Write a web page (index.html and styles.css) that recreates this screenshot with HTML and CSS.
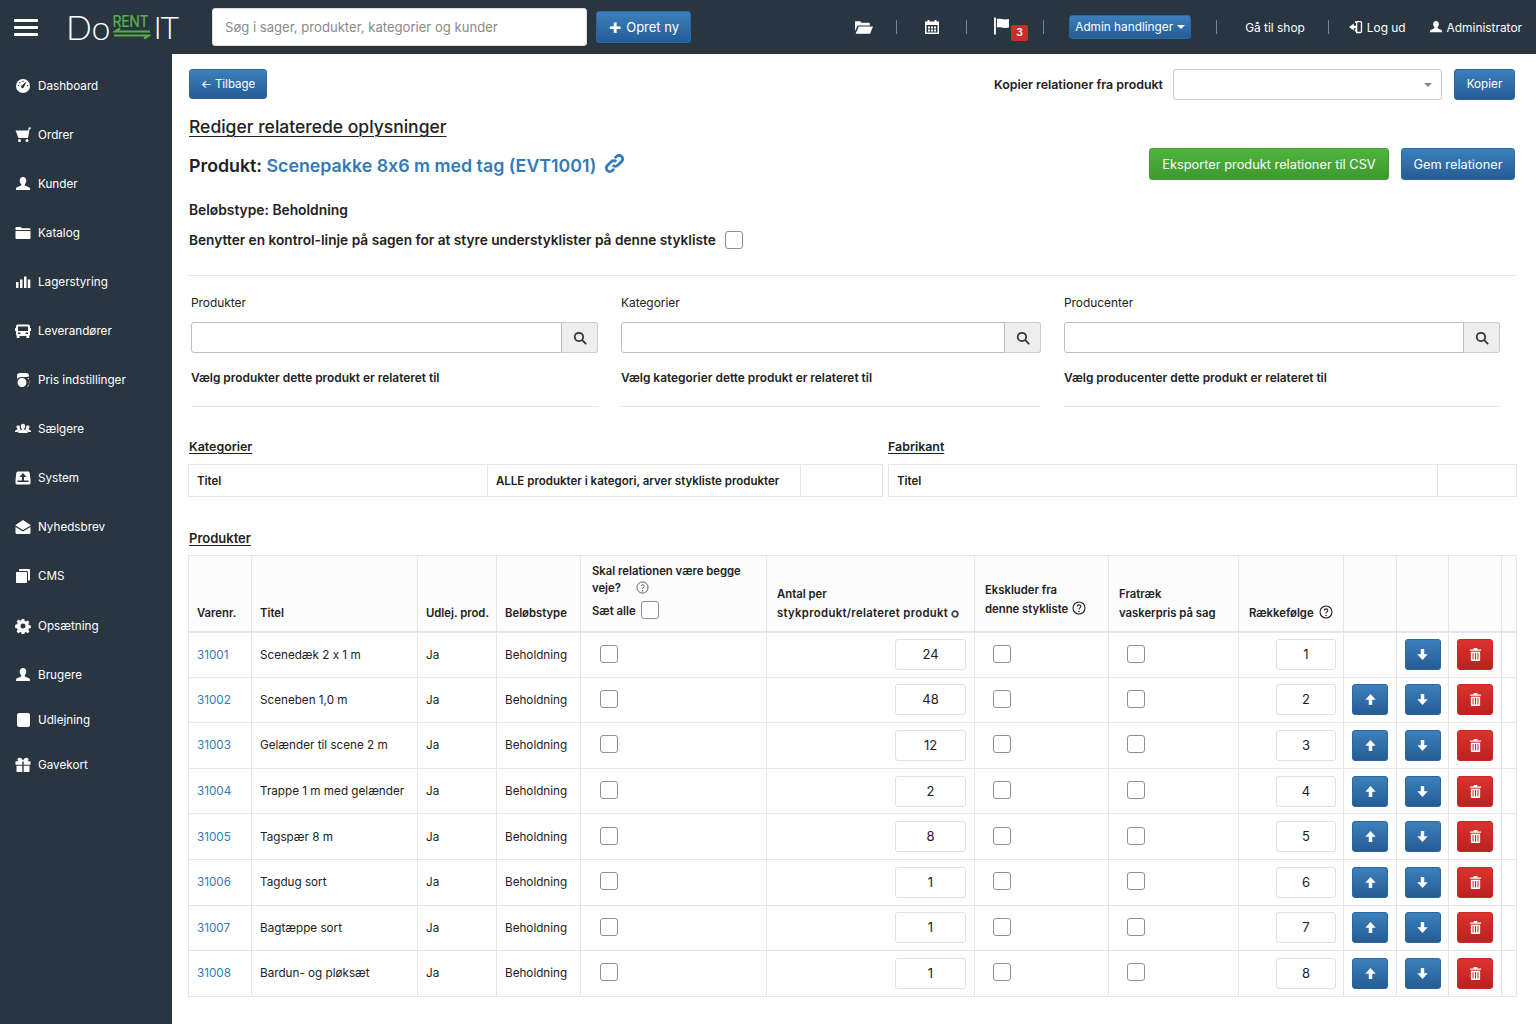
FILE: index.html
```html
<!DOCTYPE html>
<html lang="da">
  <head>
    <meta charset="UTF-8" />
    <title>DoRentIT</title>
    <link rel="stylesheet" href="styles.css">
  </head>
  <body>
    <svg class="icon-defs" width="0" height="0">
      <symbol id="i-user" viewBox="0 0 16 16"><path d="M8 1c2 0 3.300 1.500 3.300 3.600 0 1.500-.6 2.900-1.500 3.600v1.300l4.200 1.800c.8.400 1 1 1 2.700H1c0-1.700.2-2.300 1-2.700l4.200-1.800V8.200C5.300 7.500 4.700 6.100 4.700 4.600 4.700 2.500 6 1 8 1z"/></symbol>
      <symbol id="i-dash" viewBox="0 0 16 16"><path fill-rule="evenodd" d="M8 1a7 7 0 1 1 0 14A7 7 0 0 1 8 1zm3.600 2.600L7 7.200a1.500 1.500 0 1 0 2 1.800zM4 7H2.800v1.300H4zm.8-3.200-.9.900.9.900.9-.9zM8.600 2.800H7.400V4h1.200zM13.200 7H12v1.300h1.200z"/></symbol>
      <symbol id="i-cart" viewBox="0 0 16 16"><path d="M16 .5v1.300h-1.300L13 11H3.500L.5 3.500h12.600l.5-3zM4.500 12a1.500 1.500 0 1 1 0 3 1.500 1.500 0 0 1 0-3zm7.500 0a1.500 1.500 0 1 1 0 3 1.500 1.500 0 0 1 0-3z"/></symbol>
      <symbol id="i-folder" viewBox="0 0 16 16"><path d="M1.500 2h4.200l1 1.300h7.800c.5 0 1 .4 1 1V5H.5V3c0-.6.4-1 1-1zM.5 6h15v7c0 .6-.4 1-1 1h-13c-.6 0-1-.4-1-1z"/></symbol>
      <symbol id="i-bars" viewBox="0 0 16 16"><path d="M1 8h2.500v6H1zm4-2.500h2.500V14H5zm4-3h2.500V14H9zm3.800 3h2.500V14h-2.500z"/></symbol>
      <symbol id="i-truck" viewBox="0 0 16 16"><path fill-rule="evenodd" d="M3 1.500h10c1.200 0 2 .8 2 2V5h1v3h-1v3.500c0 .6-.3 1-.8 1.200V15h-2.700v-2h-7v2H1.800v-2.300c-.5-.2-.8-.6-.8-1.200V8H0V5h1V3.500c0-1.200.8-2 2-2zm0 2V8h10V3.500zM3 9.500V11h2.500V9.500zm7.500 0V11H13V9.500z"/></symbol>
      <symbol id="i-price" viewBox="0 0 16 16"><path d="M5 1h6c1.800 0 3 1 3 2.300 0 .7-.3 1.200-.8 1.700H6.500C4 5 2.500 6 2 7.500V3.500C2 2 3.200 1 5 1zM7 6a4.500 4.500 0 1 1 0 9 4.500 4.500 0 0 1 0-9zm5.500 0H14v7c0 1-.8 1.700-2 1.800a5.500 5.500 0 0 0 .5-8.800z"/></symbol>
      <symbol id="i-users" viewBox="0 0 18 16"><path d="M9 2c1.500 0 2.500 1.200 2.500 2.800 0 1.200-.5 2.300-1.200 2.800v1.200l3.200 1.500c.6.300.8.800.8 2.200H3.700c0-1.400.2-1.900.8-2.200l3.200-1.500V7.600C7 7.100 6.500 6 6.500 4.800 6.500 3.200 7.500 2 9 2zM3.500 4c1 0 1.700.5 2 1.400-.2 1.200.1 2.300.9 3v.8l-2.500 1.200c-.6.300-1 .6-1.200 1.100H0c0-1.300.2-1.700.7-2l1.900-.9V7.500C2 7 1.600 6.100 1.600 5.400 1.600 4.600 2.400 4 3.500 4zm11 0c1.100 0 1.900.6 1.900 1.400 0 .7-.4 1.600-1 2.100v1.100l1.900.9c.5.300.7.700.7 2h-2.700c-.2-.5-.6-.8-1.200-1.100l-2.500-1.200v-.8c.8-.7 1.100-1.800.9-3 .3-.9 1-1.400 2-1.400z"/></symbol>
      <symbol id="i-system" viewBox="0 0 16 16"><path fill-rule="evenodd" d="M3 1.500h10c1 0 1.500.6 1.700 1.500L15.500 10v3c0 .9-.6 1.500-1.500 1.500H2c-.9 0-1.500-.6-1.500-1.500v-3L1.300 3C1.500 2.100 2 1.500 3 1.500zM8 3 4.500 7H7v3.500H2.500V12h11v-1.500H9V7h2.500z"/></symbol>
      <symbol id="i-mail" viewBox="0 0 16 16"><path d="M8 1 15.500 6v.5L8 11 .5 6.500V6zM.5 8 8 12.500 15.500 8v5.500c0 .8-.6 1.500-1.500 1.500H2C1.100 15 .5 14.300.5 13.500z"/></symbol>
      <symbol id="i-copy" viewBox="0 0 16 16"><path d="M5 1h9c.6 0 1 .4 1 1v9.500c0 .6-.4 1-1 1h-1V4.500c0-.8-.6-1.500-1.500-1.500H4V2c0-.6.4-1 1-1zM2 4h9c.6 0 1 .4 1 1v9c0 .6-.4 1-1 1H2c-.6 0-1-.4-1-1V5c0-.6.4-1 1-1z"/></symbol>
      <symbol id="i-gear" viewBox="0 0 16 16"><path fill-rule="evenodd" d="M6.700 1h2.600l.4 2 1.200.5 1.700-1.100 1.800 1.800-1.100 1.700.5 1.200 2 .4v2.600l-2 .4-.5 1.200 1.100 1.700-1.800 1.800-1.700-1.100-1.200.5-.4 2H6.700l-.4-2-1.200-.5-1.700 1.100-1.800-1.800 1.100-1.700-.5-1.200-2-.4V6.700l2-.4.5-1.200-1.100-1.700 1.800-1.800 1.700 1.100 1.200-.5zM8 5.500a2.500 2.500 0 1 0 0 5 2.500 2.500 0 0 0 0-5z"/></symbol>
      <symbol id="i-book" viewBox="0 0 16 16"><path d="M4.500 1H13c1.200 0 2 .8 2 2v10c0 1.200-.8 2-2 2H4.500C2.800 15 2 14 2 12.500v-9C2 2 2.800 1 4.500 1z"/></symbol>
      <symbol id="i-gift" viewBox="0 0 16 16"><path d="M4.500.8c1.500 0 2.800 1.200 3.500 2.800C8.700 2 10 .8 11.500.8c1.200 0 2 .7 2 1.700S12.900 4 12 4.300h3.500v3.500H8.700V4.500H7.300v3.300H.5V4.300H4c-.9-.3-1.500-.9-1.500-1.800 0-1 .8-1.700 2-1.700zM1.500 8.800h5.800V15H2.500c-.6 0-1-.4-1-1zm7.200 0h5.800V14c0 .6-.4 1-1 1H8.700z"/></symbol>
      <symbol id="i-folder-open" viewBox="0 0 18 16"><path d="M1 2h5l1 1.500h7c.6 0 1 .4 1 1V6H4.500c-.8 0-1.300.4-1.600 1L1 11.500V3c0-.6 0-1 0-1zM4.500 7H18l-2.800 7H1.500z"/></symbol>
      <symbol id="i-cal" viewBox="0 0 16 16"><path fill-rule="evenodd" d="M1 2.500h2.500V1h2v1.500h5V1h2v1.500H15V15H1zM2.500 6v7.500h11V6zM4 7.500h2v2H4zm3 0h2v2H7zm3 0h2v2h-2zm-6 3h2v2H4zm3 0h2v2H7zm3 0h2v2h-2z"/></symbol>
      <symbol id="i-flag" viewBox="0 0 16 16"><path d="M1 0h1.700v16H1zm2.700 1.500c3-1 5.500 1.200 11.300 0v8c-5.800 1.200-8.300-1-11.300 0z"/></symbol>
      <symbol id="i-logout" viewBox="0 0 16 16"><path fill-rule="evenodd" d="M8 1h5c1.300 0 2 .8 2 2v10c0 1.200-.7 2-2 2H8v-1.500c-.8 0-1.300-.7-1.300-1.500v-1.500H8v-7H6.700V3c0-1 .6-1.500 1.300-2zm1.500 1.500V13.500H13c.4 0 .5-.2.500-.5V3c0-.3-.1-.5-.5-.5zM5.500 4v2.500H8v3H5.500V12L0 8z"/></symbol>
      <symbol id="i-search" viewBox="0 0 16 16"><path fill="none" stroke="currentColor" stroke-width="2" stroke-linecap="round" d="M6.800 2a4.800 4.800 0 1 1 0 9.600 4.800 4.800 0 0 1 0-9.600zM10.500 10.500 14.500 14.500"/></symbol>
      <symbol id="i-link" viewBox="0 0 18 18"><path fill="none" stroke="currentColor" stroke-width="2.400" d="M7.500 10.500a3 3 0 0 0 4.300 0l3.300-3.300a3 3 0 0 0-4.300-4.300L9.300 4.400M10.500 7.500a3 3 0 0 0-4.300 0l-3.300 3.300a3 3 0 0 0 4.300 4.300l1.500-1.500"/></symbol>
      <symbol id="i-up" viewBox="0 0 12 12"><path d="M6 1l4.800 5.200H7.600V11H4.400V6.200H1.200z"/></symbol>
      <symbol id="i-down" viewBox="0 0 12 12"><path d="M6 11 1.200 5.800h3.200V1h3.200v4.800h3.200z"/></symbol>
      <symbol id="i-trash" viewBox="0 0 12 14"><path fill-rule="evenodd" d="M4.200 0h3.600l.5 1.500H12V3H0V1.500h3.700zM1 4h10v9c0 .6-.4 1-1 1H2c-.6 0-1-.4-1-1zm1.800 1.500V12.500h1.100V5.500zm2.600 0V12.500h1.200V5.500zm2.700 0V12.500h1.100V5.500z"/></symbol>
    </svg>

    <header class="topbar">
      <div class="burger"><span></span><span></span><span></span></div>
      <div class="logo">
        <span class="logo-word">Do</span>
        <span class="logo-mid">
          <span class="logo-rent">RENT</span>
          <svg class="logo-arrows" viewBox="0 0 38 13"><path fill="none" stroke="#52b043" stroke-width="2.200" d="M7 1.500 2 4.500H37M31 11.500l5-3H1"/></svg>
        </span>
        <span class="logo-word logo-it">IT</span>
      </div>
      <input class="top-search" type="text" placeholder="Søg i sager, produkter, kategorier og kunder">
      <a class="btn btn-blue btn-create"><span class="plus">+</span> Opret ny</a>

      <nav class="top-right">
        <svg class="top-icon folder-open"><use href="#i-folder-open"/></svg>
        <span class="sep sep-a"></span>
        <svg class="top-icon cal"><use href="#i-cal"/></svg>
        <span class="sep sep-b"></span>
        <span class="flag-wrap">
          <svg class="top-icon flag"><use href="#i-flag"/></svg>
          <span class="badge">3</span>
        </span>
        <span class="sep sep-c"></span>
        <a class="btn btn-blue btn-admin">Admin handlinger <span class="caret-white"></span></a>
        <span class="sep sep-d"></span>
        <a class="top-link shop">Gå til shop</a>
        <span class="sep sep-e"></span>
        <a class="top-link logout"><svg class="top-icon small"><use href="#i-logout"/></svg>Log ud</a>
        <a class="top-link admin"><svg class="top-icon small"><use href="#i-user"/></svg>Administrator</a>
      </nav>
    </header>

    <div class="page">
      <aside class="sidebar">
        <a class="side-item"><svg><use href="#i-dash"/></svg>Dashboard</a>
        <a class="side-item"><svg><use href="#i-cart"/></svg>Ordrer</a>
        <a class="side-item"><svg><use href="#i-user"/></svg>Kunder</a>
        <a class="side-item"><svg><use href="#i-folder"/></svg>Katalog</a>
        <a class="side-item"><svg><use href="#i-bars"/></svg>Lagerstyring</a>
        <a class="side-item"><svg><use href="#i-truck"/></svg>Leverandører</a>
        <a class="side-item"><svg><use href="#i-price"/></svg>Pris indstillinger</a>
        <a class="side-item"><svg><use href="#i-users"/></svg>Sælgere</a>
        <a class="side-item"><svg><use href="#i-system"/></svg>System</a>
        <a class="side-item"><svg><use href="#i-mail"/></svg>Nyhedsbrev</a>
        <a class="side-item"><svg><use href="#i-copy"/></svg>CMS</a>
        <a class="side-item"><svg><use href="#i-gear"/></svg>Opsætning</a>
        <a class="side-item"><svg><use href="#i-user"/></svg>Brugere</a>
        <a class="side-item short"><svg><use href="#i-book"/></svg>Udlejning</a>
        <a class="side-item"><svg><use href="#i-gift"/></svg>Gavekort</a>
      </aside>

      <main class="content">
        <div class="row-top">
          <a class="btn btn-blue btn-back">&#8592; Tilbage</a>
          <div class="copy-from">
            <label>Kopier relationer fra produkt</label>
            <div class="select-box"><span class="caret-grey"></span></div>
            <a class="btn btn-blue btn-copy">Kopier</a>
          </div>
        </div>

        <h1 class="page-title">Rediger relaterede oplysninger</h1>

        <div class="row-product">
          <h2 class="product-title">Produkt: <a>Scenepakke 8x6 m med tag (EVT1001)</a><svg class="link-icon"><use href="#i-link"/></svg></h2>
          <div class="product-actions">
            <a class="btn btn-green">Eksporter produkt relationer til CSV</a>
            <a class="btn btn-blue btn-save">Gem relationer</a>
          </div>
        </div>

        <p class="line-type">Beløbstype: Beholdning</p>
        <p class="line-control">Benytter en kontrol-linje på sagen for at styre understyklister på denne stykliste <span class="check"></span></p>

        <div class="filters">
          <div class="filter">
            <label>Produkter</label>
            <div class="input-group"><div class="field"></div><div class="addon"><svg><use href="#i-search"/></svg></div></div>
            <p>Vælg produkter dette produkt er relateret til</p>
          </div>
          <div class="filter">
            <label>Kategorier</label>
            <div class="input-group"><div class="field"></div><div class="addon"><svg><use href="#i-search"/></svg></div></div>
            <p>Vælg kategorier dette produkt er relateret til</p>
          </div>
          <div class="filter">
            <label>Producenter</label>
            <div class="input-group"><div class="field"></div><div class="addon"><svg><use href="#i-search"/></svg></div></div>
            <p>Vælg producenter dette produkt er relateret til</p>
          </div>
        </div>

        <div class="mini-tables">
          <section class="mini mini-left">
            <h3 class="section-title">Kategorier</h3>
            <table class="grid pull">
              <colgroup><col class="c-a"><col class="c-b"><col></colgroup>
              <tr><th>Titel</th><th>ALLE produkter i kategori, arver stykliste produkter</th><th></th></tr>
            </table>
          </section>
          <section class="mini mini-right">
            <h3 class="section-title">Fabrikant</h3>
            <table class="grid">
              <colgroup><col class="c-c"><col></colgroup>
              <tr><th>Titel</th><th></th></tr>
            </table>
          </section>
        </div>

        <h3 class="section-title products-title">Produkter</h3>
        <table class="grid pull products">
          <colgroup>
            <col style="width:63px"><col style="width:166px"><col style="width:79px"><col style="width:84px"><col style="width:186px"><col style="width:208px"><col style="width:134px"><col style="width:130px"><col style="width:105px"><col style="width:53px"><col style="width:52px"><col style="width:53px"><col>
          </colgroup>
          <thead>
            <tr>
              <th>Varenr.</th>
              <th>Titel</th>
              <th>Udlej. prod.</th>
              <th>Beløbstype</th>
              <th class="th-both">
                <div>Skal relationen være begge</div>
                <div>veje? <svg class="help small-help" viewBox="0 0 14 14"><circle cx="7" cy="7" r="6" fill="none" stroke="#555" stroke-width="1"/><path fill="none" stroke="#555" d="M5.500 5.500C5.500 3.500 8.800 3.500 8.800 5.500c0 1.300-1.800 1.300-1.800 3"/><circle cx="7" cy="10.500" r=".8" fill="#555"/></svg></div>
                <div class="set-all">Sæt alle <span class="check check-head"></span></div>
              </th>
              <th><div class="th-line">Antal per</div><div class="th-line th-spaced">stykprodukt/relateret produkt <svg class="tiny-help" viewBox="0 0 8 8"><circle cx="4" cy="4" r="2.800" fill="none" stroke="#444" stroke-width="1.800"/></svg></div></th>
              <th class="th-ex"><div class="th-line">Ekskluder fra</div><div class="th-line">denne stykliste <svg class="help" viewBox="0 0 14 14"><circle cx="7" cy="7" r="6" fill="none" stroke="#222" stroke-width="1.100"/><path fill="none" stroke="#222" stroke-width="1.100" d="M5.200 5.500C5.200 3.300 8.800 3.300 8.800 5.500c0 1.400-1.800 1.400-1.800 3"/><circle cx="7" cy="10.500" r=".8" fill="#222"/></svg></div></th>
              <th><div class="th-line">Fratræk</div><div class="th-line">vaskerpris på sag</div></th>
              <th>Rækkefølge <svg class="help help-far" viewBox="0 0 14 14"><circle cx="7" cy="7" r="6" fill="none" stroke="#222" stroke-width="1.100"/><path fill="none" stroke="#222" stroke-width="1.100" d="M5.200 5.500C5.200 3.300 8.800 3.300 8.800 5.500c0 1.400-1.800 1.400-1.800 3"/><circle cx="7" cy="10.500" r=".8" fill="#222"/></svg></th>
              <th></th><th></th><th></th><th></th>
            </tr>
          </thead>
          <tbody>
            <tr>
              <td><a>31001</a></td><td>Scenedæk 2 x 1 m</td><td>Ja</td><td>Beholdning</td>
              <td class="td-check td-both"><span class="check"></span></td>
              <td class="td-num"><span class="num-box wide">24</span></td>
              <td class="td-check"><span class="check"></span></td>
              <td class="td-check"><span class="check"></span></td>
              <td class="td-num"><span class="num-box">1</span></td>
              <td class="td-btn"></td>
              <td class="td-btn"><a class="btn btn-blue btn-sq"><svg><use href="#i-down"/></svg></a></td>
              <td class="td-btn"><a class="btn btn-red btn-sq"><svg><use href="#i-trash"/></svg></a></td>
              <td></td>
            </tr>
            <tr>
              <td><a>31002</a></td><td>Sceneben 1,0 m</td><td>Ja</td><td>Beholdning</td>
              <td class="td-check td-both"><span class="check"></span></td>
              <td class="td-num"><span class="num-box wide">48</span></td>
              <td class="td-check"><span class="check"></span></td>
              <td class="td-check"><span class="check"></span></td>
              <td class="td-num"><span class="num-box">2</span></td>
              <td class="td-btn"><a class="btn btn-blue btn-sq"><svg><use href="#i-up"/></svg></a></td>
              <td class="td-btn"><a class="btn btn-blue btn-sq"><svg><use href="#i-down"/></svg></a></td>
              <td class="td-btn"><a class="btn btn-red btn-sq"><svg><use href="#i-trash"/></svg></a></td>
              <td></td>
            </tr>
            <tr>
              <td><a>31003</a></td><td>Gelænder til scene 2 m</td><td>Ja</td><td>Beholdning</td>
              <td class="td-check td-both"><span class="check"></span></td>
              <td class="td-num"><span class="num-box wide">12</span></td>
              <td class="td-check"><span class="check"></span></td>
              <td class="td-check"><span class="check"></span></td>
              <td class="td-num"><span class="num-box">3</span></td>
              <td class="td-btn"><a class="btn btn-blue btn-sq"><svg><use href="#i-up"/></svg></a></td>
              <td class="td-btn"><a class="btn btn-blue btn-sq"><svg><use href="#i-down"/></svg></a></td>
              <td class="td-btn"><a class="btn btn-red btn-sq"><svg><use href="#i-trash"/></svg></a></td>
              <td></td>
            </tr>
            <tr>
              <td><a>31004</a></td><td>Trappe 1 m med gelænder</td><td>Ja</td><td>Beholdning</td>
              <td class="td-check td-both"><span class="check"></span></td>
              <td class="td-num"><span class="num-box wide">2</span></td>
              <td class="td-check"><span class="check"></span></td>
              <td class="td-check"><span class="check"></span></td>
              <td class="td-num"><span class="num-box">4</span></td>
              <td class="td-btn"><a class="btn btn-blue btn-sq"><svg><use href="#i-up"/></svg></a></td>
              <td class="td-btn"><a class="btn btn-blue btn-sq"><svg><use href="#i-down"/></svg></a></td>
              <td class="td-btn"><a class="btn btn-red btn-sq"><svg><use href="#i-trash"/></svg></a></td>
              <td></td>
            </tr>
            <tr>
              <td><a>31005</a></td><td>Tagspær 8 m</td><td>Ja</td><td>Beholdning</td>
              <td class="td-check td-both"><span class="check"></span></td>
              <td class="td-num"><span class="num-box wide">8</span></td>
              <td class="td-check"><span class="check"></span></td>
              <td class="td-check"><span class="check"></span></td>
              <td class="td-num"><span class="num-box">5</span></td>
              <td class="td-btn"><a class="btn btn-blue btn-sq"><svg><use href="#i-up"/></svg></a></td>
              <td class="td-btn"><a class="btn btn-blue btn-sq"><svg><use href="#i-down"/></svg></a></td>
              <td class="td-btn"><a class="btn btn-red btn-sq"><svg><use href="#i-trash"/></svg></a></td>
              <td></td>
            </tr>
            <tr>
              <td><a>31006</a></td><td>Tagdug sort</td><td>Ja</td><td>Beholdning</td>
              <td class="td-check td-both"><span class="check"></span></td>
              <td class="td-num"><span class="num-box wide">1</span></td>
              <td class="td-check"><span class="check"></span></td>
              <td class="td-check"><span class="check"></span></td>
              <td class="td-num"><span class="num-box">6</span></td>
              <td class="td-btn"><a class="btn btn-blue btn-sq"><svg><use href="#i-up"/></svg></a></td>
              <td class="td-btn"><a class="btn btn-blue btn-sq"><svg><use href="#i-down"/></svg></a></td>
              <td class="td-btn"><a class="btn btn-red btn-sq"><svg><use href="#i-trash"/></svg></a></td>
              <td></td>
            </tr>
            <tr>
              <td><a>31007</a></td><td>Bagtæppe sort</td><td>Ja</td><td>Beholdning</td>
              <td class="td-check td-both"><span class="check"></span></td>
              <td class="td-num"><span class="num-box wide">1</span></td>
              <td class="td-check"><span class="check"></span></td>
              <td class="td-check"><span class="check"></span></td>
              <td class="td-num"><span class="num-box">7</span></td>
              <td class="td-btn"><a class="btn btn-blue btn-sq"><svg><use href="#i-up"/></svg></a></td>
              <td class="td-btn"><a class="btn btn-blue btn-sq"><svg><use href="#i-down"/></svg></a></td>
              <td class="td-btn"><a class="btn btn-red btn-sq"><svg><use href="#i-trash"/></svg></a></td>
              <td></td>
            </tr>
            <tr>
              <td><a>31008</a></td><td>Bardun- og pløksæt</td><td>Ja</td><td>Beholdning</td>
              <td class="td-check td-both"><span class="check"></span></td>
              <td class="td-num"><span class="num-box wide">1</span></td>
              <td class="td-check"><span class="check"></span></td>
              <td class="td-check"><span class="check"></span></td>
              <td class="td-num"><span class="num-box">8</span></td>
              <td class="td-btn"><a class="btn btn-blue btn-sq"><svg><use href="#i-up"/></svg></a></td>
              <td class="td-btn"><a class="btn btn-blue btn-sq"><svg><use href="#i-down"/></svg></a></td>
              <td class="td-btn"><a class="btn btn-red btn-sq"><svg><use href="#i-trash"/></svg></a></td>
              <td></td>
            </tr>
          </tbody>
        </table>
      </main>
    </div>
  </body>
</html>
```

FILE: styles.css
```css
* {
  box-sizing: border-box;
}

html, body {
  height: 100%;
}

body {
  margin: 0;
  overflow: hidden;
  background-color: #2a3542;
  color: #222;
  font-family: Inter, "Liberation Sans", Arial, sans-serif;
  font-feature-settings: "calt" 0;
  font-size: 11.7px;
}

.icon-defs {
  position: absolute;
}

a {
  color: #337ab7;
  text-decoration: none;
}

/* Top bar */
.topbar {
  display: flex;
  align-items: center;
  height: 54px;
  background-color: #2a3542;
  color: #fff;
}

.burger {
  display: flex;
  flex-direction: column;
  gap: 4px;
  width: 24px;
  margin-left: 14px;
}

.burger span {
  display: block;
  height: 3px;
  background-color: #fff;
  border-radius: 1px;
}

.logo {
  display: flex;
  align-items: center;
  width: 124px;
  margin-left: 28px;
  color: #fff;
}

.logo-word {
  font-family: Lato, Inter, sans-serif;
  font-size: 34px;
  font-weight: 300;
  line-height: 34px;
}

.logo-it {
  font-size: 32px;
  letter-spacing: -1.5px;
}

.logo-mid {
  display: flex;
  flex-direction: column;
  width: 38px;
  margin: 0 3px 0 2px;
}

.logo-rent {
  color: #52b043;
  font-size: 14px;
  font-weight: 500;
  line-height: 13px;
  letter-spacing: -0.4px;
  transform: scaleY(1.15);
}

.logo-arrows {
  width: 38px;
  height: 13px;
}

.top-search {
  width: 375px;
  height: 38px;
  margin-left: 22px;
  padding: 0 12px;
  border: 1px solid #ddd;
  border-radius: 3px;
  font-family: inherit;
  font-size: 13.1px;
}

.top-search::placeholder {
  color: #8a8a8a;
}

.top-right {
  display: flex;
  align-items: center;
  margin-left: auto;
  padding-right: 14px;
}

.top-icon {
  display: block;
  fill: #fff;
}

.folder-open {
  width: 19px;
  height: 17px;
}

.cal {
  width: 16px;
  height: 16px;
  margin-left: 27px;
}

.flag-wrap {
  position: relative;
  display: block;
  width: 35px;
  height: 30px;
  margin-left: 26px;
}

.flag {
  width: 17px;
  height: 18px;
  margin-top: 5px;
}

.badge {
  position: absolute;
  right: 0;
  bottom: 1px;
  width: 17px;
  height: 16px;
  background-color: #cf2b2b;
  border-radius: 2px;
  color: #fff;
  font-size: 10.5px;
  font-weight: 600;
  line-height: 16px;
  text-align: center;
}

.sep {
  display: block;
  width: 1px;
  height: 14px;
  background-color: #7b848e;
}

.sep-a { margin-left: 23px; }
.sep-b { margin-left: 26px; }
.sep-c { margin-left: 15px; }
.sep-d { margin-left: 25px; }
.sep-e { margin-left: 23px; }

.top-link {
  display: flex;
  align-items: center;
  color: #fff;
  font-size: 11.9px;
}

.top-icon.small {
  width: 14px;
  height: 14px;
  margin-right: 4px;
}

.shop { margin-left: 28px; }
.logout { margin-left: 20px; }
.admin { margin-left: 23px; }

/* Buttons */
.btn {
  display: inline-flex;
  align-items: center;
  justify-content: center;
  height: 31px;
  border: 1px solid #2a689f;
  border-radius: 3px;
  color: #fff;
  font-size: 12.8px;
  white-space: nowrap;
}

.btn-blue {
  background: linear-gradient(#3b80bd, #265c93);
}

.btn-green {
  background: linear-gradient(#4fb33e, #3d9a2d);
  border-color: #43a233;
}

.btn-red {
  background: linear-gradient(#dc332e, #b82220);
  border-color: #c62a27;
}

.btn-create {
  width: 95px;
  height: 32px;
  margin-left: 9px;
  font-size: 13px;
}

.plus {
  margin-right: 4px;
  font-size: 21px;
  font-weight: 700;
  line-height: 20px;
}

.btn-admin {
  width: 122px;
  height: 24px;
  margin-left: 25px;
  font-size: 11.8px;
}

.caret-white {
  width: 0;
  height: 0;
  margin-left: 4px;
  border-top: 4px solid #fff;
  border-left: 4px solid transparent;
  border-right: 4px solid transparent;
}

/* Page */
.page {
  display: flex;
  height: calc(100% - 54px);
}

.sidebar {
  flex: 0 0 172px;
  padding-top: 7px;
  background-color: #2a3542;
}

.side-item {
  display: flex;
  align-items: center;
  height: 49.1px;
  padding-left: 15px;
  color: #fff;
  font-size: 11.7px;
}

.side-item.short {
  height: 41px;
}

.side-item svg {
  flex: 0 0 16px;
  width: 16px;
  height: 16px;
  margin-right: 7px;
  fill: #fff;
}

.content {
  flex: 1;
  min-width: 0;
  padding: 15px 19px 0 17px;
  background-color: #fff;
}

.row-top {
  display: flex;
  align-items: center;
  justify-content: space-between;
  height: 30px;
  padding-right: 2px;
}

.btn-back {
  width: 78px;
  height: 30px;
  font-size: 11.5px;
}

.copy-from {
  display: flex;
  align-items: center;
}

.copy-from label {
  margin-right: 10px;
  font-size: 12.4px;
  font-weight: 600;
}

.select-box {
  position: relative;
  width: 269px;
  height: 31px;
  margin-right: 12px;
  border: 1px solid #ccc;
  border-radius: 3px;
}

.caret-grey {
  position: absolute;
  top: 13px;
  right: 9px;
  border-top: 4px solid #888;
  border-left: 4px solid transparent;
  border-right: 4px solid transparent;
}

.btn-copy {
  width: 61px;
  font-size: 11.7px;
}

.page-title {
  margin: 16px 0 0;
  font-size: 17.5px;
  font-weight: 500;
  line-height: 24px;
  text-decoration: underline;
  text-decoration-thickness: 1px;
  text-underline-offset: 3px;
}

.row-product {
  display: flex;
  align-items: center;
  justify-content: space-between;
  height: 32px;
  margin-top: 11px;
  padding-right: 2px;
}

.product-title {
  margin: 0;
  font-size: 17.8px;
  font-weight: 600;
  line-height: 26px;
}

.product-title a {
  color: #337ab7;
}

.link-icon {
  width: 21px;
  height: 21px;
  margin-left: 8px;
  color: #337ab7;
  vertical-align: -2px;
}

.product-actions {
  display: flex;
  gap: 12px;
  margin-bottom: 4px;
}

.btn-green {
  width: 240px;
  height: 32px;
}

.btn-save {
  width: 114px;
  height: 32px;
}

.line-type {
  margin: 18px 0 0;
  font-size: 13.8px;
  font-weight: 600;
  line-height: 20px;
}

.line-control {
  display: flex;
  align-items: center;
  gap: 9px;
  height: 20px;
  margin: 10px 0 0;
  font-size: 13.7px;
  font-weight: 600;
}

.check {
  display: inline-block;
  width: 18px;
  height: 18px;
  border: 1.5px solid #8f8f8f;
  border-radius: 3px;
  background-color: #fff;
}

/* Filter row */
.filters {
  display: grid;
  grid-template-columns: 407px 420px 436px;
  gap: 23px;
  margin-top: 25px;
  padding: 0 0 0 2px;
  border-top: 1px solid #e8e8e8;
}

.filter {
  height: 131px;
  padding-top: 19px;
  border-bottom: 1px solid #e8e8e8;
}

.filter label {
  display: block;
  font-size: 11.9px;
  line-height: 16px;
}

.input-group {
  display: flex;
  height: 31px;
  margin-top: 11px;
}

.field {
  flex: 1;
  border: 1px solid #bdbdbd;
  border-radius: 3px 0 0 3px;
}

.addon {
  display: flex;
  align-items: center;
  justify-content: center;
  width: 36px;
  background-color: #eee;
  border: 1px solid #ccc;
  border-left: none;
  border-radius: 0 3px 3px 0;
  color: #333;
}

.addon svg {
  width: 14px;
  height: 14px;
}

.filter p {
  margin: 17px 0 0;
  font-size: 11.9px;
  font-weight: 600;
  line-height: 16px;
}

/* Tables */
.mini-tables {
  display: flex;
  gap: 5px;
  margin-top: 32px;
}

.mini-left { width: 694px; }
.mini-right { width: 629px; }

.section-title {
  margin: 0 0 9px;
  font-size: 12.4px;
  font-weight: 600;
  line-height: 16px;
  text-decoration: underline;
  text-underline-offset: 2px;
}

.grid {
  width: 100%;
  table-layout: fixed;
  border-collapse: collapse;
}

.grid.pull {
  width: calc(100% + 1px);
  margin-left: -1px;
}

.grid th,
.grid td {
  border: 1px solid #e6e6e6;
  text-align: left;
}

.grid th {
  height: 32px;
  padding: 0 8px;
  font-size: 11.5px;
  font-weight: 600;
}

.c-a { width: 299px; }
.c-b { width: 313px; }
.c-c { width: 549px; }

.products-title {
  margin-top: 33px;
  font-size: 13px;
}

.products th {
  height: 76px;
  padding: 0 8px 8px;
  vertical-align: bottom;
  background-color: #fcfcfc;
  border-bottom-width: 2px;
  font-size: 11.3px;
  line-height: 19px;
  white-space: nowrap;
}

.products th.th-both {
  padding: 0 10px 8px 11px;
  line-height: 17px;
}

.th-both .set-all {
  display: flex;
  align-items: center;
  gap: 5px;
  margin-top: 4px;
}

.check-head {
  margin-bottom: 4px;
}

.products th:nth-child(n+6) {
  padding-left: 10px;
}

.products th.th-ex {
  padding-bottom: 12px;
}

.th-spaced {
  letter-spacing: 0.33px;
}

.help {
  width: 14px;
  height: 14px;
  margin-left: 1px;
  vertical-align: -2px;
}

.help-far {
  margin-left: 3px;
}

.small-help {
  width: 13px;
  height: 13px;
  margin-left: 12px;
}

.tiny-help {
  width: 8px;
  height: 8px;
  vertical-align: -1px;
}

.products td {
  height: 45.6px;
  padding: 0 8px;
  font-size: 11.7px;
}

.products .td-check {
  padding-left: 18px;
}

.products .td-both {
  padding-left: 19px;
}

.td-check .check {
  display: block;
  margin-top: -2px;
}

.products .td-num {
  padding: 0 8px 0 0;
  text-align: right;
}

.num-box {
  display: inline-block;
  width: 60px;
  height: 31px;
  margin-right: -1px;
  border: 1px solid #e0e0e0;
  border-radius: 3px;
  font-size: 13px;
  line-height: 29px;
  text-align: center;
  vertical-align: middle;
}

.num-box.wide {
  width: 71px;
  margin-right: 0;
}

.products .td-btn {
  padding: 0;
  text-align: center;
}

.btn-sq {
  width: 36px;
  height: 31px;
  vertical-align: middle;
}

.btn-sq svg {
  width: 13px;
  height: 13px;
  fill: #fff;
}
```
